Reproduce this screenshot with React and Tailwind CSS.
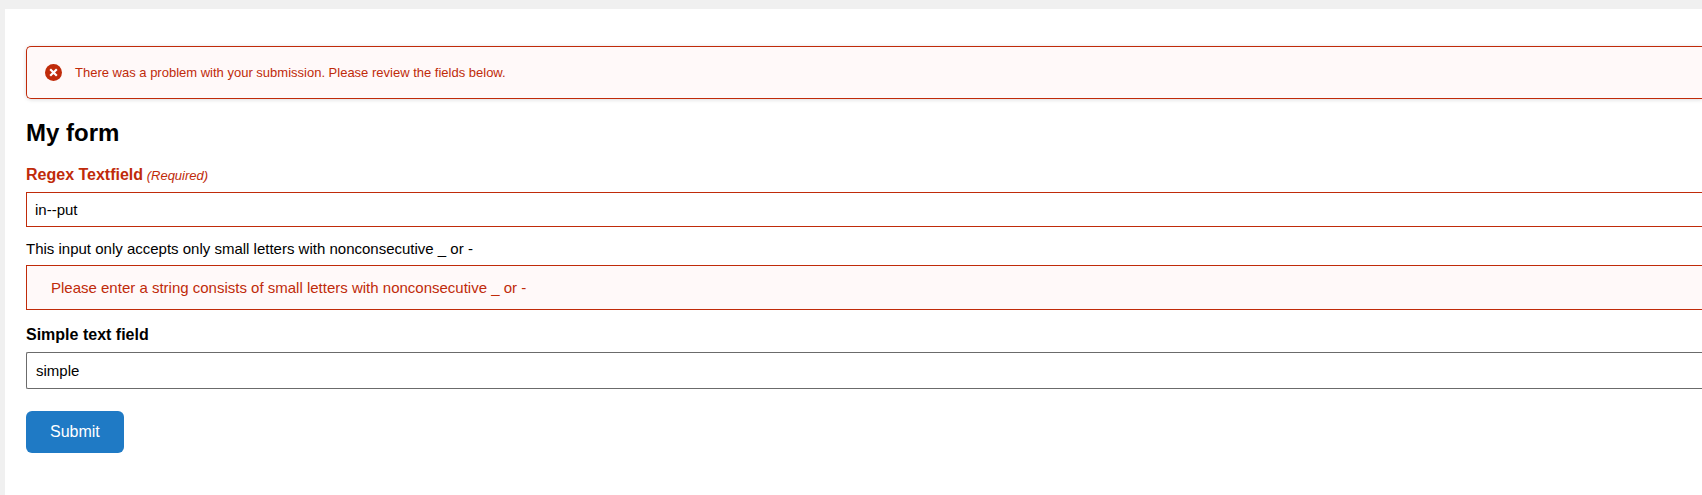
function ErrorIcon() {
  return (
    <svg viewBox="0 0 17 17" className="size-[17px] shrink-0" aria-hidden="true">
      <circle cx="8.5" cy="8.5" r="8.5" fill="#c02b0a" />
      <path d="M5.2 5.2l6.6 6.6M11.8 5.2l-6.6 6.6" stroke="#fff" strokeWidth="2.2" strokeLinecap="butt" />
    </svg>
  );
}

export default function App() {
  return (
    <div className="min-h-screen bg-[#f0f0f0] pt-[9px] pl-[5px] font-['Liberation_Sans',Arial,sans-serif] text-black">
      <main className="min-h-[calc(100vh-9px)] overflow-hidden bg-white pt-[37px] pb-10 pl-[21px]">
        <div
          role="alert"
          className="flex h-[53px] items-center gap-[13px] rounded-l-[5px] border border-r-0 border-[#c02b0a] bg-[#fff9f9] pl-[18px] text-[13px] leading-5 text-[#c02b0a] shadow-[0_1px_4px_rgba(0,0,0,0.11),0_0_4px_rgba(18,25,97,0.04)]"
        >
          <ErrorIcon />
          <p>There was a problem with your submission. Please review the fields below.</p>
        </div>

        <form noValidate onSubmit={(event) => event.preventDefault()} className="mt-[17px] flex flex-col gap-[13px]">
          <h1 className="text-2xl leading-[34px] font-bold">My form</h1>

          <div className="flex flex-col">
            <label htmlFor="regex" className="text-base font-bold text-[#c02b0a]">
              Regex Textfield<span className="text-[13px] font-normal italic"> (Required)</span>
            </label>
            <input
              id="regex"
              type="text"
              defaultValue="in--put"
              required
              aria-invalid="true"
              aria-describedby="regex-help regex-error"
              className="mt-[5px] h-[35px] border border-r-0 border-[#c02b0a] bg-white px-2 text-[15px] outline-none"
            />
            <p id="regex-help" className="mt-3 text-[15px] leading-5">
              This input only accepts only small letters with nonconsecutive _ or -
            </p>
            <div
              id="regex-error"
              className="mt-[6px] border border-r-0 border-[#c02b0a] bg-[#fff9f9] px-6 py-[11px] text-[15px] leading-[21px] text-[#c02b0a]"
            >
              Please enter a string consists of small letters with nonconsecutive _ or -
            </div>
          </div>

          <div className="flex flex-col">
            <label htmlFor="simple" className="text-base font-bold">
              Simple text field
            </label>
            <input
              id="simple"
              type="text"
              defaultValue="simple"
              className="mt-[5px] h-[37px] rounded-l-[2px] border border-r-0 border-[#6b6b6b] bg-white px-[9px] text-[15px] outline-none"
            />
          </div>

          <button
            type="submit"
            className="mt-[9px] h-[42px] cursor-pointer self-start rounded-md bg-[#1f7ac5] px-6 text-base text-white"
          >
            Submit
          </button>
        </form>
      </main>
    </div>
  );
}
